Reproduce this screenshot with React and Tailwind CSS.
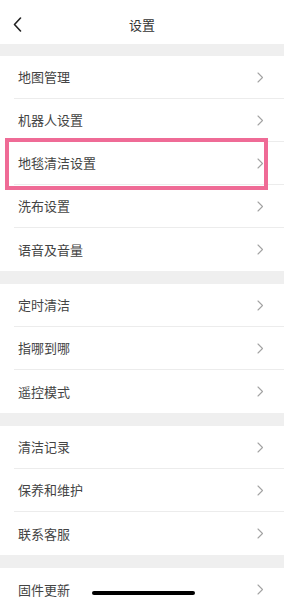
import React from 'react';

const groups = [
  ['地图管理', '机器人设置', '地毯清洁设置', '洗布设置', '语音及音量'],
  ['定时清洁', '指哪到哪', '遥控模式'],
  ['清洁记录', '保养和维护', '联系客服'],
  ['固件更新'],
];

const Chevron = () => (
  <svg width="7" height="11" viewBox="0 0 7 11" fill="none" className="mr-[20px] shrink-0">
    <path d="M1 1l4.5 4.5L1 10" stroke="#a3a3a3" strokeWidth="1.1" strokeLinecap="round" strokeLinejoin="round" />
  </svg>
);

const Row = ({ label, last, highlight }) => (
  <div className="relative h-[43px] pl-[14px] bg-white">
    <div className={`h-full flex items-center justify-between pl-[4px] ${last ? '' : 'border-b border-[#ececec]'}`}>
      <span className="text-[13px] text-[#444]">{label}</span>
      <Chevron />
    </div>
    {highlight && (
      <div className="absolute z-10 left-[5px] right-[16px] -top-[4px] -bottom-[5px] border-[4px] border-[#ef6b96] pointer-events-none" />
    )}
  </div>
);

export default function App() {
  return (
    <div
      className="relative w-[284px] h-[600px] overflow-hidden bg-white"
      style={{ fontFamily: '"Noto Sans CJK SC", "Noto Sans", sans-serif' }}
    >
      <header className="h-[44px] grid grid-cols-[40px_1fr_40px] items-center">
        <div className="pl-[13px] pt-[5px]">
          <svg width="9" height="15" viewBox="0 0 9 15" fill="none">
            <path d="M7.5 1L1.5 7.5l6 6.5" stroke="#222" strokeWidth="1.6" strokeLinecap="round" strokeLinejoin="round" />
          </svg>
        </div>
        <h1 className="text-center text-[13px] text-[#333] pt-[6px]">设置</h1>
        <div />
      </header>
      <div className="h-[12px] bg-[#efefef]" />
      {groups.map((items, gi) => (
        <div key={gi}>
          {items.map((label, i) => (
            <Row key={label} label={label} last={i === items.length - 1} highlight={label === '地毯清洁设置'} />
          ))}
          {gi < groups.length - 1 && <div className="h-[13px] bg-[#efefef]" />}
        </div>
      ))}
      <div className="absolute left-[92px] bottom-[5px] w-[103px] h-[4px] rounded-full bg-black" />
    </div>
  );
}
